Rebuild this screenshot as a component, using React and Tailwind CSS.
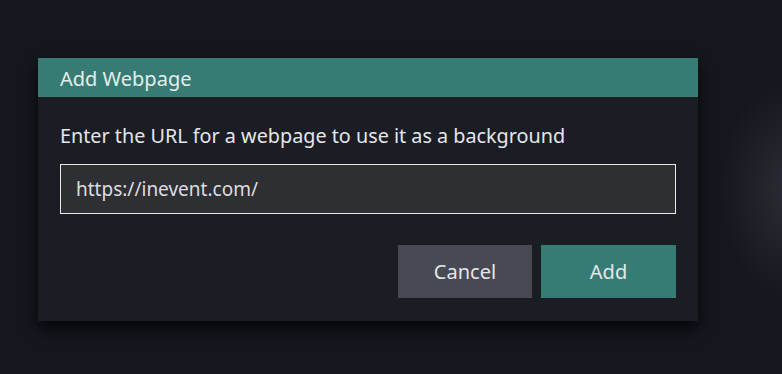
import React, { useState } from "react";

const AddWebpageDialog = () => {
  const [url, setUrl] = useState("https://inevent.com/");

  return (
    <div className="w-[660px] bg-[#1b1d24] shadow-[0_8px_14px_rgba(0,0,0,0.75)]">
      {/* HEADER */}
      <div className="h-[39px] bg-[#367c74] px-[22px] pt-[3px] flex items-center">
        <h1 className="text-[20px] text-[#e6ecea] leading-none">Add Webpage</h1>
      </div>

      {/* BODY */}
      <div className="px-[22px] pt-[24px] pb-[23px]">
        <p className="text-[19.8px] leading-[30px] text-[#e4e6ea]">
          Enter the URL for a webpage to use it as a background
        </p>

        <input
          type="text"
          value={url}
          onChange={(e) => setUrl(e.target.value)}
          className="mt-[13px] w-full h-[50px] bg-[#2e2f33] border border-[#e8e8e8] px-[15px] text-[19px] text-[#dcdde0] outline-none"
        />

        <div className="mt-[31px] flex justify-end gap-[9px]">
          <button className="w-[134px] h-[53px] bg-[#474a53] text-[20px] text-[#e4e6ea]">
            Cancel
          </button>
          <button className="w-[135px] h-[53px] bg-[#367c74] text-[20px] text-[#e4e6ea]">
            Add
          </button>
        </div>
      </div>
    </div>
  );
};

export default function App() {
  return (
    <div
      className="w-[782px] h-[374px] overflow-hidden pt-[58px] pl-[38px] bg-[#14171e] bg-[radial-gradient(ellipse_70px_110px_at_790px_190px,#2a2d35,transparent)] font-['Noto_Sans',sans-serif]"
    >
      <AddWebpageDialog />
    </div>
  );
}
